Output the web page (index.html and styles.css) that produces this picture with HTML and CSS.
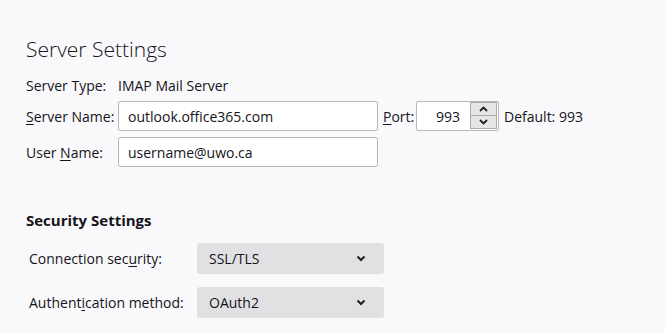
FILE: index.html
```html
<!DOCTYPE html>
<html lang="en">
<head>
<meta charset="UTF-8">
<title>Server Settings</title>
<link rel="stylesheet" href="styles.css">
</head>
<body>
  <div class="page">
    <h1>Server Settings</h1>
    <div class="server">
      <div class="row">
        <span class="label">Server Type:</span>
        <span class="value">IMAP Mail Server</span>
      </div>
      <div class="row">
        <label class="label"><u>S</u>erver Name:</label>
        <input class="field" type="text" value="outlook.office365.com">
        <label class="port-label"><u>P</u>ort:</label>
        <div class="port">
          <span class="port-value">993</span>
          <div class="spin">
            <div class="spin-btn">
              <svg width="9" height="6" viewBox="0 0 9 6"><path d="M1 5 L4.5 1.5 L8 5" fill="none" stroke="#222" stroke-width="1.8"/></svg>
            </div>
            <div class="spin-btn">
              <svg width="9" height="6" viewBox="0 0 9 6"><path d="M1 1 L4.5 4.5 L8 1" fill="none" stroke="#222" stroke-width="1.8"/></svg>
            </div>
          </div>
        </div>
        <span class="default">Default: 993</span>
      </div>
      <div class="row">
        <label class="label">User <u>N</u>ame:</label>
        <input class="field" type="text" value="username@uwo.ca">
      </div>
    </div>

    <h2>Security Settings</h2>
    <div class="security">
      <div class="sel-row">
        <label class="sel-label">Connection sec<u>u</u>rity:</label>
        <div class="select">
          <span>SSL/TLS</span>
          <svg width="10" height="7" viewBox="0 0 10 7"><path d="M1.5 1.5 L5 5 L8.5 1.5" fill="none" stroke="#222" stroke-width="2"/></svg>
        </div>
      </div>
      <div class="sel-row">
        <label class="sel-label">Authent<u>i</u>cation method:</label>
        <div class="select">
          <span>OAuth2</span>
          <svg width="10" height="7" viewBox="0 0 10 7"><path d="M1.5 1.5 L5 5 L8.5 1.5" fill="none" stroke="#222" stroke-width="2"/></svg>
        </div>
      </div>
    </div>
  </div>
</body>
</html>
```

FILE: styles.css
```css
body {
  margin: 0;
  background: #f9f9fb;
  color: #15141a;
  font-family: 'Open Sans', 'Noto Sans', sans-serif;
  font-size: 14px;
}
.page {
  padding: 35px 0 0 26px;
}
h1 {
  margin: 0;
  font-size: 21px;
  font-weight: 300;
  line-height: 28px;
}
.server {
  margin-top: 12px;
  display: flex;
  flex-direction: column;
  gap: 6px;
}
.row {
  display: flex;
  align-items: center;
  min-height: 20px;
}
.label {
  width: 92px;
  flex: none;
}
u {
  text-decoration-thickness: 1px;
  text-underline-offset: 2px;
}
.field {
  width: 260px;
  height: 30px;
  box-sizing: border-box;
  border: 1px solid #b7b7bb;
  border-radius: 2px;
  background: #fff;
  padding: 0 9px;
  font: inherit;
  color: inherit;
  margin: 0;
}
.port-label {
  margin-left: 5px;
  width: 33px;
}
.port {
  width: 83px;
  height: 30px;
  box-sizing: border-box;
  border: 1px solid #b7b7bb;
  border-radius: 2px;
  background: #fff;
  display: flex;
  align-items: center;
  justify-content: flex-end;
  padding-right: 1px;
}
.port-value {
  margin-right: 10px;
}
.spin {
  display: flex;
  flex-direction: column;
  width: 27px;
  height: 27px;
  border: 1px solid #aaa;
  box-sizing: border-box;
  margin-top: -1px;
}
.spin-btn {
  flex: 1;
  background: #e6e6e6;
  display: flex;
  align-items: center;
  justify-content: center;
}
.spin-btn + .spin-btn {
  border-top: 1px solid #aaa;
}
.default {
  margin-left: 5px;
}
h2 {
  margin: 42px 0 0;
  font-size: 15px;
  font-weight: 700;
  line-height: 22px;
}
.security {
  margin-top: 12px;
  display: flex;
  flex-direction: column;
  gap: 13px;
}
.sel-row {
  display: flex;
  align-items: center;
}
.sel-label {
  width: 168px;
  padding-left: 3px;
  flex: none;
}
.select {
  width: 187px;
  height: 31px;
  box-sizing: border-box;
  background: #e1e1e4;
  border-radius: 3px;
  display: flex;
  align-items: center;
  justify-content: space-between;
  padding: 0 18px 0 12px;
}
```
